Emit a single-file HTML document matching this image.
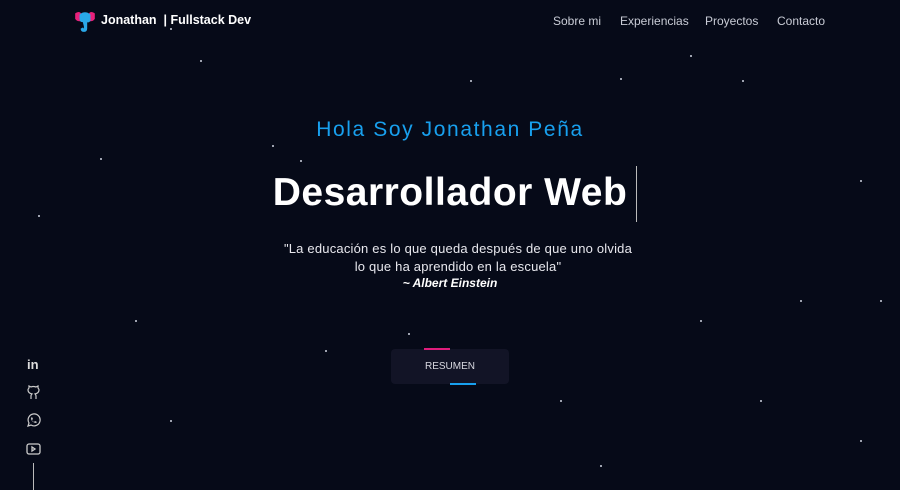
<!DOCTYPE html>
<html><head><meta charset="utf-8"><style>
*{margin:0;padding:0;box-sizing:border-box}
body{width:900px;height:490px;overflow:hidden;background:#060a18;font-family:"Liberation Sans",sans-serif;position:relative;color:#fff}
.s{position:absolute;width:2px;height:2px;background:#cfd4e0;border-radius:50%}
.brand{position:absolute;left:101px;top:13px;font-weight:bold;font-size:12.5px;color:#fff}
nav{position:absolute;top:14px;font-size:12px;color:#c9ccd6}
nav span{position:absolute;white-space:nowrap}
.h{position:absolute;left:0;width:900px;text-align:center}
</style></head><body>
<svg style="position:absolute;left:73px;top:9px" width="24" height="24" viewBox="0 0 22 22">
<path d="M2 4 Q6 1 8 5 L8 11 Q4 12 2 9 Z" fill="#e8207a"/>
<path d="M20 4 Q16 1 14 5 L14 11 Q18 12 20 9 Z" fill="#e8207a"/>
<path d="M6 5 Q11 1 16 5 L16 11 Q14 13 13 12 L13 18 Q13 21 10 21 Q7 21 7 18 L9 17 Q10 19 10 16 L9 12 Q6 12 6 9 Z" fill="#2aa8e8"/>
</svg>
<div class="brand">Jonathan &nbsp;| Fullstack Dev</div>
<nav><span style="left:553px">Sobre mi</span><span style="left:620px">Experiencias</span><span style="left:705px">Proyectos</span><span style="left:777px">Contacto</span></nav>
<div class="h" style="top:118px;font-size:21px;color:#18a0ee;letter-spacing:1.6px">Hola Soy Jonathan Peña</div>
<div class="h" style="top:171px;font-size:39px;font-weight:bold;letter-spacing:0.5px">Desarrollador Web</div>
<div style="position:absolute;left:636px;top:166px;width:1px;height:56px;background:#bbb"></div>
<div class="h" style="top:240px;left:8px;font-size:13px;color:#e8e8ee;line-height:18px;letter-spacing:0.2px">"La educación es lo que queda después de que uno olvida<br>lo que ha aprendido en la escuela"</div>
<div class="h" style="top:276px;font-size:12px;font-weight:bold;font-style:italic">~ Albert Einstein</div>
<div style="position:absolute;left:391px;top:349px;width:118px;height:35px;background:#121426;border-radius:4px;font-size:10px;color:#d8d8e0;text-align:center;line-height:35px">RESUMEN</div>
<div style="position:absolute;left:424px;top:348px;width:26px;height:2px;background:#e01d7c"></div>
<div style="position:absolute;left:450px;top:383px;width:26px;height:2px;background:#18a0ee"></div>
<div style="position:absolute;left:27px;top:357px;font-size:13px;font-weight:bold;color:#ddd">in</div>
<svg style="position:absolute;left:26px;top:385px" width="15" height="15" viewBox="0 0 15 15" fill="none" stroke="#ccc" stroke-width="1.2"><path d="M5 14v-3q0-1 1-2Q2 8 2 5q0-1 1-2V1l2 1q2-1 5 0l2-1v2q1 1 1 2 0 3-4 4 1 1 1 2v3"/></svg>
<svg style="position:absolute;left:26px;top:413px" width="15" height="15" viewBox="0 0 15 15" fill="none" stroke="#ccc" stroke-width="1.2"><path d="M2 13l1-3A6 6 0 1 1 5 12Z"/><path d="M5 5q0 4 5 5l1-1-2-1-1 1q-2-1-2-2l1-1-1-2Z" fill="#ccc" stroke="none"/></svg>
<svg style="position:absolute;left:26px;top:443px" width="15" height="12" viewBox="0 0 15 12" fill="none" stroke="#ccc" stroke-width="1.3"><rect x="1" y="1" width="13" height="10" rx="2"/><path d="M6 4v4l3-2Z"/></svg>
<div style="position:absolute;left:33px;top:463px;width:1px;height:27px;background:#bbb"></div>
<div class="s" style="left:170px;top:28px"></div><div class="s" style="left:742px;top:80px"></div><div class="s" style="left:620px;top:78px"></div><div class="s" style="left:200px;top:60px"></div><div class="s" style="left:100px;top:158px"></div><div class="s" style="left:38px;top:215px"></div><div class="s" style="left:272px;top:145px"></div><div class="s" style="left:300px;top:160px"></div><div class="s" style="left:408px;top:333px"></div><div class="s" style="left:325px;top:350px"></div><div class="s" style="left:700px;top:320px"></div><div class="s" style="left:860px;top:180px"></div><div class="s" style="left:800px;top:300px"></div><div class="s" style="left:600px;top:465px"></div><div class="s" style="left:560px;top:400px"></div><div class="s" style="left:170px;top:420px"></div><div class="s" style="left:860px;top:440px"></div><div class="s" style="left:470px;top:80px"></div><div class="s" style="left:690px;top:55px"></div><div class="s" style="left:135px;top:320px"></div><div class="s" style="left:880px;top:300px"></div><div class="s" style="left:760px;top:400px"></div>
</body></html>
